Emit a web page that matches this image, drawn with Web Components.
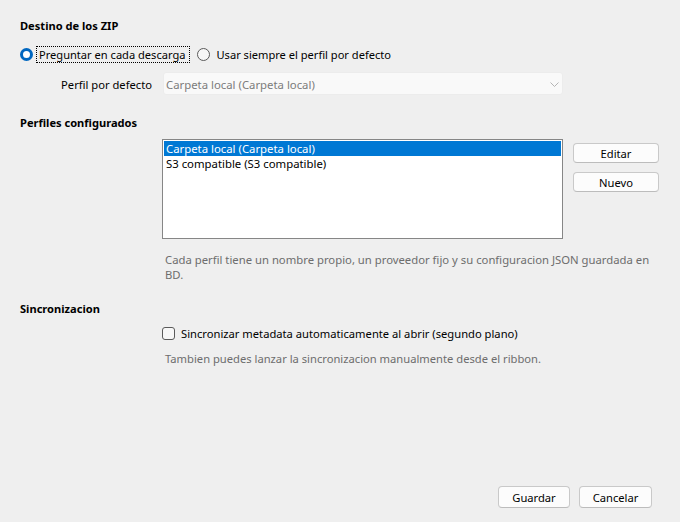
<!DOCTYPE html>
<html lang="es"><head><meta charset="utf-8"><title>Ajustes</title>
<style>
html,body{margin:0;height:100%;background:#efefef}
body{font:11.2px/15px "Noto Sans","Open Sans",sans-serif;color:#000;overflow:hidden}
</style></head>
<body>
<settings-dialog></settings-dialog>
<script>
function def(name, css, html){
  customElements.define(name, class extends HTMLElement{
    constructor(){super();const r=this.attachShadow({mode:'open'});r.innerHTML='<style>'+css+'</style>'+html;}
  });
}
def('section-title', ':host{display:block;font-weight:700;font-size:11.1px;line-height:16px;height:16px;color:#000}', '<slot></slot>');
def('radio-option', `:host{display:inline-flex;align-items:center;height:16px;font-size:11.1px}
  .c{width:13px;height:13px;box-sizing:border-box;border-radius:50%;border:1px solid #5a5a5a;background:#f7f7f7;flex:none;margin-right:6px}
  :host([checked]) .c{border:3.5px solid #0067c0;background:#fff;margin-right:3px}
  .t{white-space:nowrap;padding:0 3px 0 2px;margin-left:-2px;border:1px dotted transparent;line-height:15px;height:15px}
  :host([focused]) .t{border-color:#000;margin-left:0}`,
  '<span class="c"></span><span class="t"><slot></slot></span>');
def('check-option', `:host{display:flex;align-items:center;height:16px;white-space:nowrap}
  .b{width:13px;height:13px;box-sizing:border-box;border:1px solid #5a5a5a;border-radius:3px;background:#f7f7f7;margin-right:6px;flex:none}`,
  '<span class="b"></span><slot></slot>');
def('combo-box', `:host{display:flex;align-items:center;justify-content:space-between;box-sizing:border-box;height:23px;padding:2px 3px 0 2px;background:#f9f9f9;border:1px solid #ececec;border-radius:3px;color:#7c7c7c;white-space:nowrap;font-size:11.35px}`,
  '<slot></slot><svg width="9" height="5" viewBox="0 0 9 5"><path d="M.5.5 4.5 4.5 8.5.5" fill="none" stroke="#b4b4b4"/></svg>');
def('push-button', `:host{display:flex;align-items:center;justify-content:center;box-sizing:border-box;background:#fcfcfc;border:1px solid #c9c9c9;border-bottom-color:#bcbcbc;border-radius:4px;color:#000}`, '<slot></slot>');
def('list-item', `:host{display:block;height:15px;line-height:15px;padding-left:2px;white-space:nowrap;font-size:11.35px}
  :host([selected]){background:#0078d4;color:#fff}`, '<slot></slot>');
def('list-box', `:host{display:block;box-sizing:border-box;height:100px;border:1px solid #868686;background:#fff;padding:1px}`, '<slot></slot>');
def('hint-text', `:host{display:block;color:#6d6d6d;line-height:15px;padding-left:3px}`, '<slot></slot>');
def('settings-dialog', `
  :host{display:flex;flex-direction:column;height:522px;box-sizing:border-box;padding:18px 21px 14px 20px}
  .radios{display:flex;gap:7px;margin-top:12px;height:16px;align-items:center}
  .combo-row{display:grid;grid-template-columns:132px 400px;column-gap:11px;align-items:center;margin-top:10px}
  .lbl{text-align:right;white-space:nowrap;padding-top:2px}
  section-title.s2{margin-top:20px}
  .profiles{display:grid;grid-template-columns:401px 86px;column-gap:10px;margin:8px 0 0 142px}
  .btns{display:flex;flex-direction:column;gap:9px;padding-top:4px}
  .btns push-button{height:20px}
  .h1{margin:13px 0 0 142px;font-size:11.3px}
  section-title.s3{margin-top:19px}
  check-option{margin:8px 0 0 142px}
  .h2{margin:10px 0 0 142px}
  footer{margin-top:auto;display:flex;justify-content:flex-end;gap:9px;padding-right:7px}
  footer push-button{height:22px}
  `,`
  <section-title>Destino de los ZIP</section-title>
  <div class="radios">
    <radio-option checked focused>Preguntar en cada descarga</radio-option>
    <radio-option>Usar siempre el perfil por defecto</radio-option>
  </div>
  <div class="combo-row"><span class="lbl">Perfil por defecto</span><combo-box>Carpeta local (Carpeta local)</combo-box></div>
  <section-title class="s2">Perfiles configurados</section-title>
  <div class="profiles">
    <list-box><list-item selected>Carpeta local (Carpeta local)</list-item><list-item>S3 compatible (S3 compatible)</list-item></list-box>
    <div class="btns"><push-button>Editar</push-button><push-button>Nuevo</push-button></div>
  </div>
  <hint-text class="h1">Cada perfil tiene un nombre propio, un proveedor fijo y su configuracion JSON guardada en BD.</hint-text>
  <section-title class="s3">Sincronizacion</section-title>
  <check-option>Sincronizar metadata automaticamente al abrir (segundo plano)</check-option>
  <hint-text class="h2">Tambien puedes lanzar la sincronizacion manualmente desde el ribbon.</hint-text>
  <footer><push-button style="width:72px">Guardar</push-button><push-button style="width:73px">Cancelar</push-button></footer>
`);
</script>
</body></html>
